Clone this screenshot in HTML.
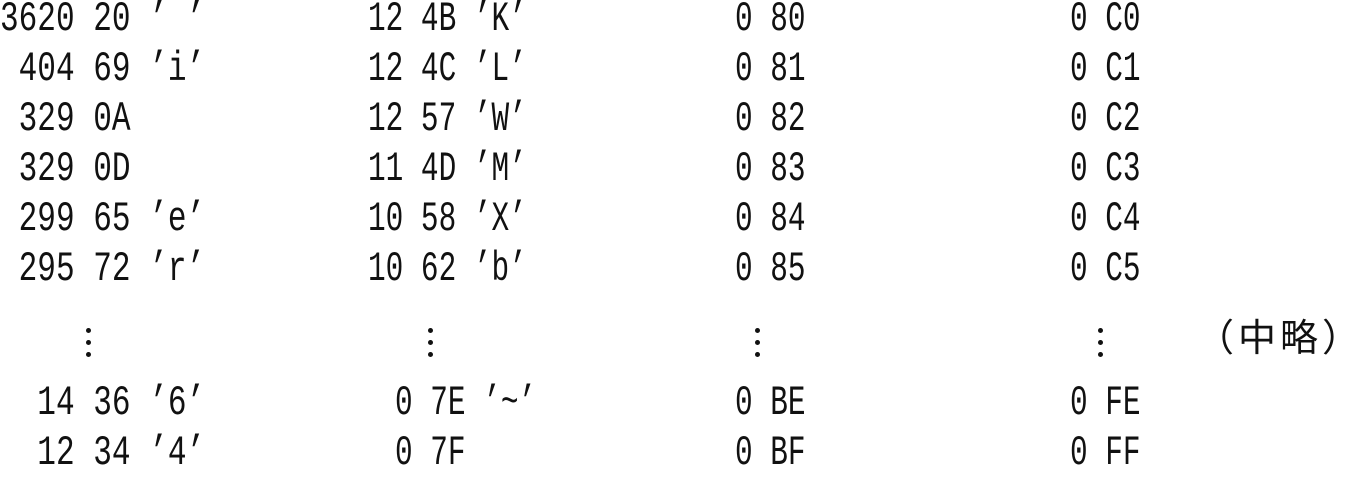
<!DOCTYPE html>
<html><head><meta charset="utf-8"><style>
body{margin:0;width:1351px;height:482px;background:#fff;overflow:hidden;position:relative;color:#111}
.r{position:absolute;font-family:"Liberation Mono",monospace;font-size:42px;line-height:50px;white-space:pre;transform:scaleX(.7);transform-origin:0 0}
.d{position:absolute;width:5px;height:5px;border-radius:50%;background:#111}
.c{position:absolute;left:1196px;top:316px;font-family:"Liberation Sans","Noto Sans CJK JP",sans-serif;font-size:38px;line-height:46px;letter-spacing:4px}
</style></head><body>
<div class="r" style="left:0;top:-6px;transform:scaleX(.74)">3620 20 ’ ’
 404 69 ’i’
 329 0A
 329 0D
 299 65 ’e’
 295 72 ’r’</div>
<div class="r" style="left:368px;top:-6px">12 4B ’K’
12 4C ’L’
12 57 ’W’
11 4D ’M’
10 58 ’X’
10 62 ’b’</div>
<div class="r" style="left:735px;top:-6px">0 80
0 81
0 82
0 83
0 84
0 85</div>
<div class="r" style="left:1070px;top:-6px">0 C0
0 C1
0 C2
0 C3
0 C4
0 C5</div>
<div class="r" style="left:0;top:378px;transform:scaleX(.74)">  14 36 ’6’
  12 34 ’4’</div>
<div class="r" style="left:395px;top:378px">0 7E ’~’
0 7F</div>
<div class="r" style="left:735px;top:378px">0 BE
0 BF</div>
<div class="r" style="left:1070px;top:378px">0 FE
0 FF</div>
<div class="d" style="left:86px;top:328px"></div><div class="d" style="left:86px;top:340px"></div><div class="d" style="left:86px;top:352px"></div>
<div class="d" style="left:428px;top:328px"></div><div class="d" style="left:428px;top:340px"></div><div class="d" style="left:428px;top:352px"></div>
<div class="d" style="left:755px;top:328px"></div><div class="d" style="left:755px;top:340px"></div><div class="d" style="left:755px;top:352px"></div>
<div class="d" style="left:1098px;top:328px"></div><div class="d" style="left:1098px;top:340px"></div><div class="d" style="left:1098px;top:352px"></div>
<div class="c">（中略）</div>
</body></html>
